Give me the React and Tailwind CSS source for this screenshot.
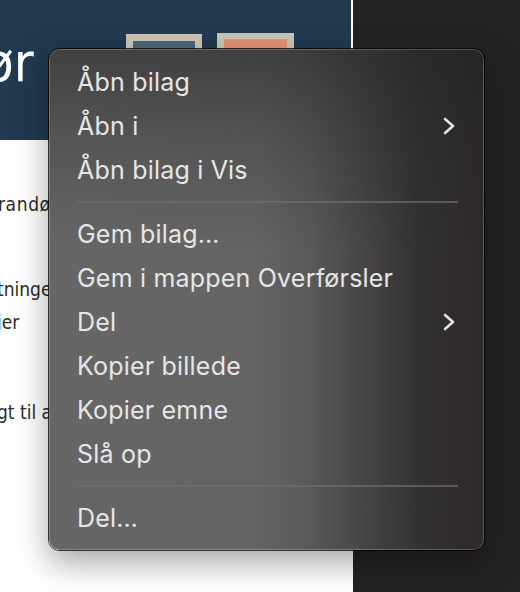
import React from "react";

const Chevron = () => (
  <svg width="14" height="20" viewBox="0 0 14 20" fill="none">
    <polyline
      points="3,3 11,10 3,17"
      stroke="#e2e2e2"
      strokeWidth="2.6"
      strokeLinecap="round"
      strokeLinejoin="round"
    />
  </svg>
);

const Item = ({ label, sub }) => (
  <div className="h-[44px] flex items-center justify-between pl-[28px] pr-[28px]">
    <span className="text-[25px] text-[#e6e6e6] leading-none tracking-[0.2px]">{label}</span>
    {sub ? <Chevron /> : null}
  </div>
);

const Sep = () => <div className="my-[9px] h-[2px] ml-[28px] mr-[26px] bg-[#6e6e6e]/70" />;

export default function App() {
  return (
    <div
      className="relative w-[520px] h-[592px] overflow-hidden flex"
      style={{ fontFamily: "Inter, 'Noto Sans', sans-serif" }}
    >
      {/* left page */}
      <div className="w-[353px] h-full bg-white border-r-2 border-white flex flex-col">
        <div className="h-[140px] bg-[#213a50] flex items-start">
          <div
            className="mt-[36px] -ml-[16px] text-[54px] leading-none text-white"
            style={{ fontFamily: "'DejaVu Sans Condensed', 'DejaVu Sans', sans-serif" }}
          >
            ør
          </div>
          <div className="ml-[92px] mt-[34px] w-[76px] h-[90px] bg-[#c9c4b5] p-[7px]">
            <div className="w-full h-full bg-[#4b6878]" />
          </div>
          <div className="ml-[15px] mt-[33px] w-[77px] h-[90px] bg-[#c9c4b5] p-[7px] pt-[6px]">
            <div className="w-full h-full bg-[#e29373]" />
          </div>
        </div>
        <div
          className="pt-[48px] text-[19px] leading-[33px] text-[#2b2b2b] whitespace-nowrap"
          style={{ fontFamily: "'DejaVu Sans Condensed', 'DejaVu Sans', sans-serif", fontWeight: 300 }}
        >
          <p className="-ml-[2px] tracking-[0.6px]">randøen</p>
          <p className="mt-[52px] -ml-[3px]">tningerne</p>
          <p className="-ml-[3px]">jer</p>
          <p className="mt-[57px] -ml-[3px]">gt til at</p>
        </div>
      </div>
      <div className="flex-1 h-full bg-[#252321]" />

      {/* context menu overlay */}
      <div className="absolute left-[48px] top-[48px] w-[437px] h-[503px] rounded-[11px] border border-black/80 shadow-[0_12px_32px_rgba(0,0,0,0.35)] overflow-hidden">
        <div className="w-full h-full rounded-[10px] shadow-[inset_0_0_0_1px_rgba(255,255,255,0.22)] bg-[linear-gradient(to_bottom,rgba(36,34,34,0.55)_0%,rgba(36,34,34,0.25)_18%,rgba(36,34,34,0)_40%),linear-gradient(to_right,#666666_0%,#646464_48%,#5a5959_60%,#474545_72%,#343231_85%,#2c2928_100%)] pt-[11px] pb-[10px] flex flex-col">
          <Item label="Åbn bilag" />
          <Item label="Åbn i" sub />
          <Item label="Åbn bilag i Vis" />
          <Sep />
          <Item label="Gem bilag…" />
          <Item label="Gem i mappen Overførsler" />
          <Item label="Del" sub />
          <Item label="Kopier billede" />
          <Item label="Kopier emne" />
          <Item label="Slå op" />
          <Sep />
          <Item label="Del…" />
        </div>
      </div>
    </div>
  );
}
